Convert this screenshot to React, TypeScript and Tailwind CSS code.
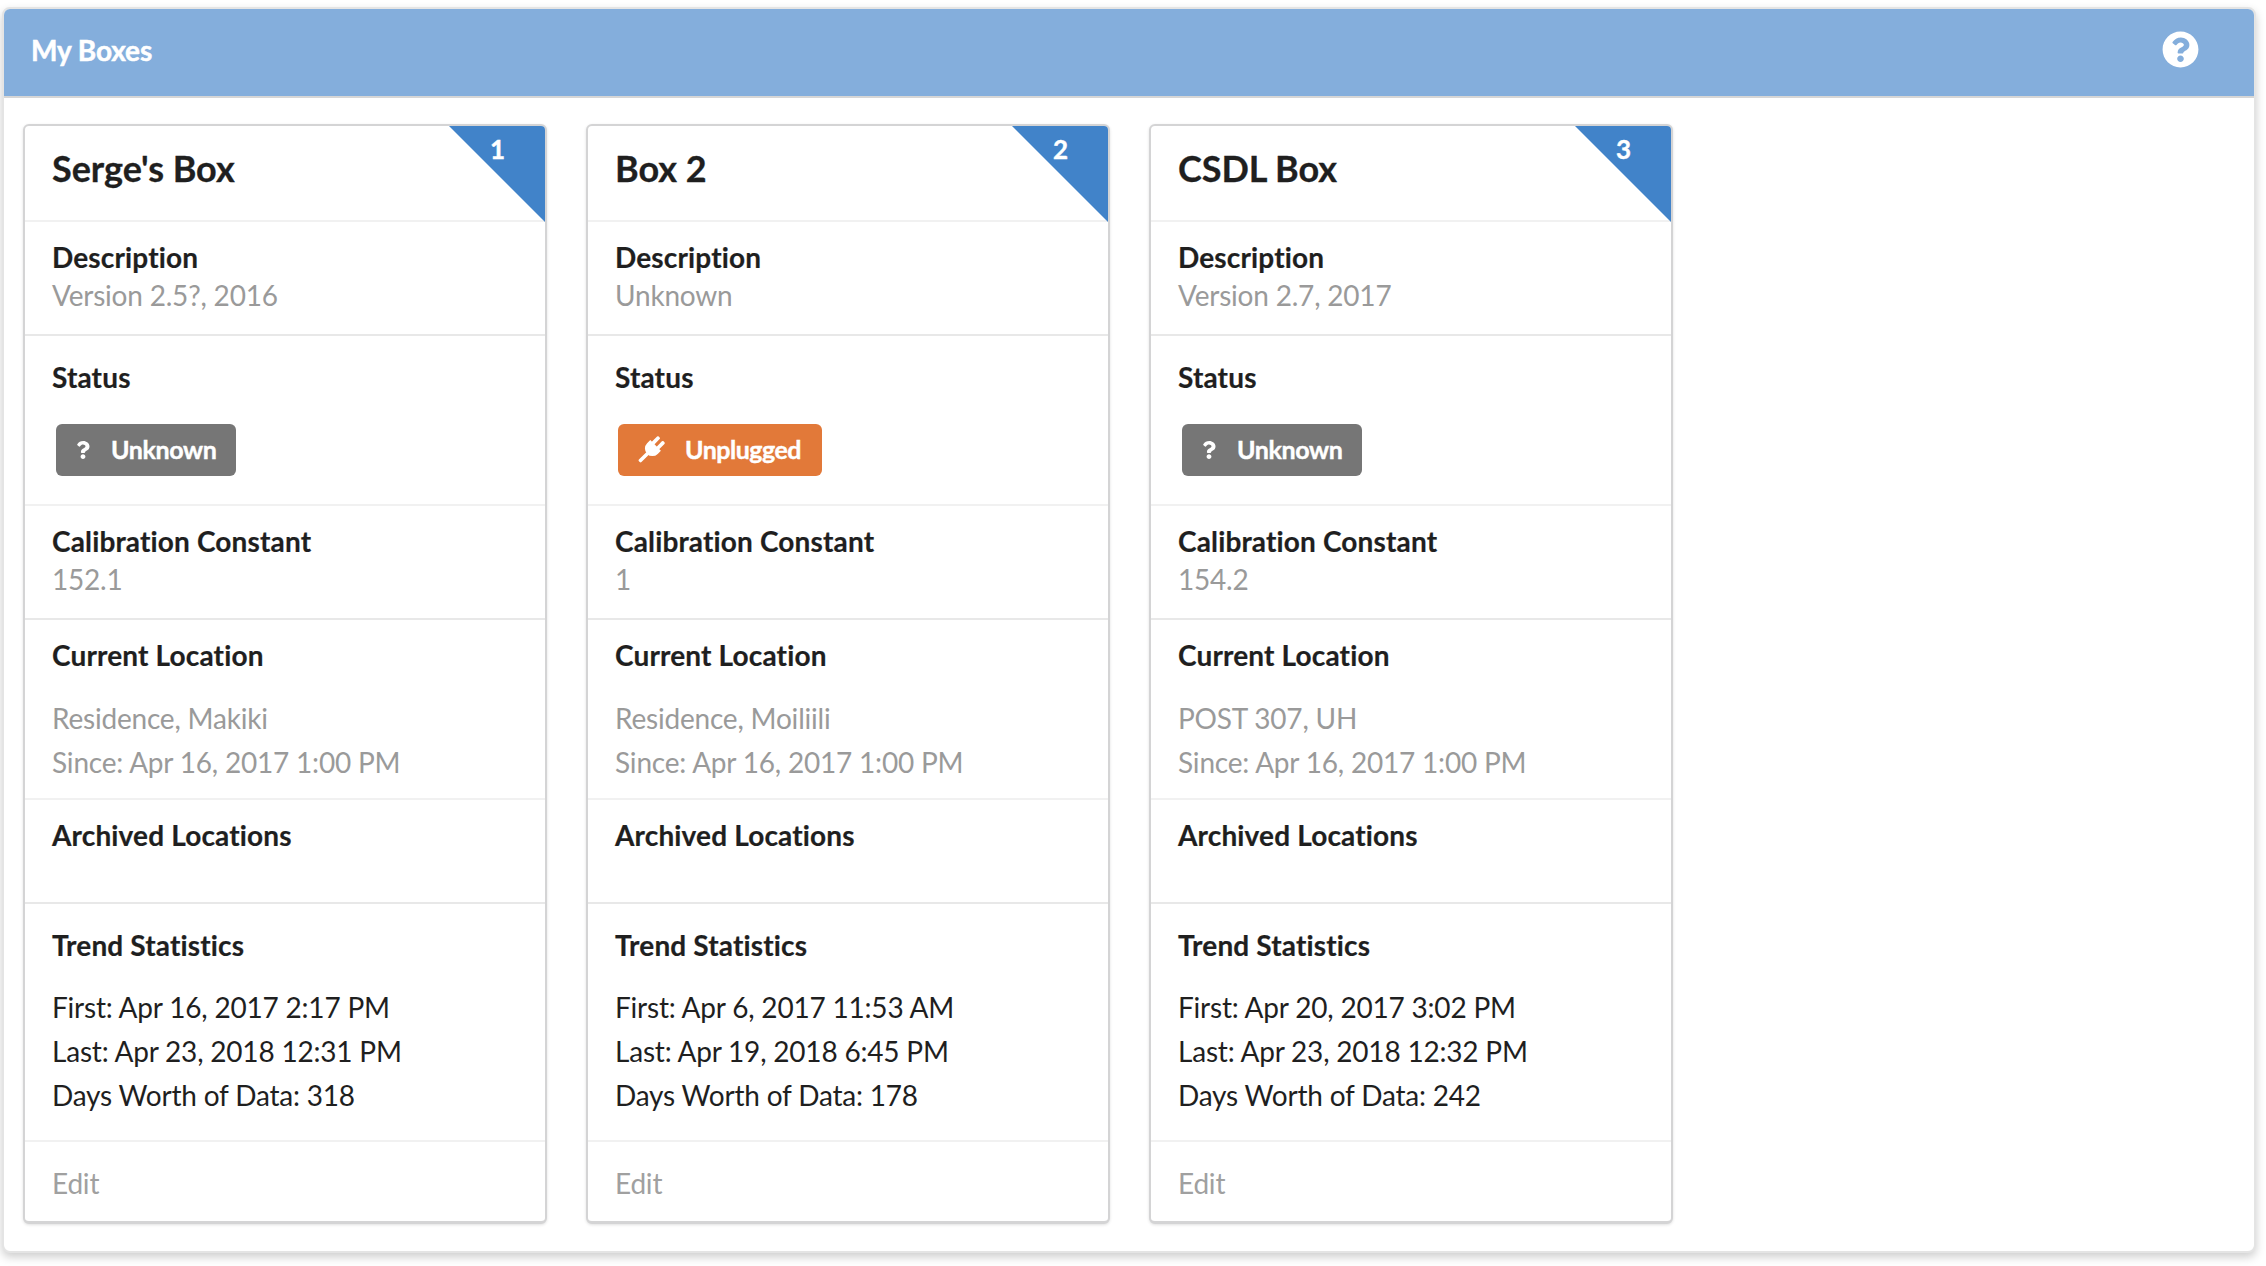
import React from "react";
import { FaQuestion, FaQuestionCircle } from "react-icons/fa";

type Box = {
  n: number; name: string; desc: string; status: "Unknown" | "Unplugged"; cal: string; loc: string;
  first: string; last: string; days: number;
};

const boxes: Box[] = [
  { n: 1, name: "Serge's Box", desc: "Version 2.5?, 2016", status: "Unknown", cal: "152.1", loc: "Residence, Makiki", first: "Apr 16, 2017 2:17 PM", last: "Apr 23, 2018 12:31 PM", days: 318 },
  { n: 2, name: "Box 2", desc: "Unknown", status: "Unplugged", cal: "1", loc: "Residence, Moiliili", first: "Apr 6, 2017 11:53 AM", last: "Apr 19, 2018 6:45 PM", days: 178 },
  { n: 3, name: "CSDL Box", desc: "Version 2.7, 2017", status: "Unknown", cal: "154.2", loc: "POST 307, UH", first: "Apr 20, 2017 3:02 PM", last: "Apr 23, 2018 12:32 PM", days: 242 },
];

function PlugIcon() {
  return (
    <svg viewBox="0 0 24 24" className="w-[24px] h-[24px] mr-[22px] overflow-visible" fill="currentColor">
      <g transform="rotate(45 12 12)">
        <rect x="6.8" y="-3" width="3.6" height="9.5" rx="1.2" />
        <rect x="13.6" y="-3" width="3.6" height="9.5" rx="1.2" />
        <path d="M4.5 5.5H19.5V10a7.5 7.5 0 0 1-15 0Z" />
        <rect x="10.2" y="16" width="3.6" height="12.5" rx="1.2" />
      </g>
    </svg>
  );
}

function Label({ children }: { children: React.ReactNode }) {
  return <div className="font-bold text-[#1f1f1f] h-[38px] leading-[38px] tracking-[0.15px] [-webkit-text-stroke:0.2px]">{children}</div>;
}

function Card({ b }: { b: Box }) {
  return (
    <div className="relative w-[524px] h-[1100px] flex flex-col rounded-[6px] border-2 border-[#d4d4d5] border-b-[3px] bg-white overflow-hidden shadow-[0_1px_3px_rgba(0,0,0,0.12)]">
      <div className="absolute top-0 right-0 w-[96px] h-[96px] bg-[#4183c9] [clip-path:polygon(0_0,100%_0,100%_100%)]">
        <span className="absolute top-[6px] right-[40px] text-white font-bold text-[26px] leading-[34px] [-webkit-text-stroke:0.4px]">{b.n}</span>
      </div>
      <div className="h-[96px] shrink-0 pl-[27px] pt-[19px] text-[36px] leading-[46px] font-bold text-[#1f1f1f] border-b-2 border-[#f1f1f1] tracking-[-0.05px] [-webkit-text-stroke:0.3px]">{b.name}</div>
      <div className="h-[114px] shrink-0 pl-[27px] pt-[16px] border-b-2 border-[#e8e8e8]">
        <Label>Description</Label>
        <div className="text-[#9a9a9a] leading-[38px]">{b.desc}</div>
      </div>
      <div className="h-[170px] shrink-0 pl-[27px] pt-[22px] border-b-2 border-[#f1f1f1]">
        <Label>Status</Label>
        <div className="mt-[28px] ml-[4px]">
          {b.status === "Unknown" ? (
            <span className="inline-flex items-center h-[52px] w-[180px] rounded-[6px] bg-[#767676] text-white font-bold text-[25px] tracking-[-0.35px] pl-[20px] [-webkit-text-stroke:0.4px]">
              <FaQuestion className="w-[14px] h-[18px] mr-[21px]" />Unknown
            </span>
          ) : (
            <span className="inline-flex items-center -ml-[1px] h-[52px] w-[204px] rounded-[6px] bg-[#e27939] text-white font-bold text-[25px] tracking-[-0.5px] pl-[21px] [-webkit-text-stroke:0.4px]">
              <PlugIcon />Unplugged
            </span>
          )}
        </div>
      </div>
      <div className="h-[114px] shrink-0 pl-[27px] pt-[16px] border-b-2 border-[#e8e8e8]">
        <Label>Calibration Constant</Label>
        <div className="text-[#9a9a9a] leading-[38px]">{b.cal}</div>
      </div>
      <div className="h-[180px] shrink-0 pl-[27px] pt-[16px] border-b-2 border-[#f1f1f1]">
        <Label>Current Location</Label>
        <div className="mt-[22px] text-[#9a9a9a] leading-[44px]">
          <div>{b.loc}</div>
          <div>Since: Apr 16, 2017 1:00 PM</div>
        </div>
      </div>
      <div className="h-[104px] shrink-0 pl-[27px] pt-[16px] border-b-2 border-[#e8e8e8]">
        <Label>Archived Locations</Label>
      </div>
      <div className="h-[238px] shrink-0 pl-[27px] pt-[22px] border-b-2 border-[#f1f1f1]">
        <Label>Trend Statistics</Label>
        <div className="mt-[21px] text-[#1f1f1f] leading-[44px]">
          <div>First: {b.first}</div>
          <div>Last: {b.last}</div>
          <div>Days Worth of Data: {b.days}</div>
        </div>
      </div>
      <div className="flex-1 pl-[27px] pt-[22px] text-[#a0a0a0] leading-[38px]">Edit</div>
    </div>
  );
}

export default function App() {
  return (
    <div className="w-[2266px] h-[1266px] bg-white pt-[7px] pl-[2px] overflow-hidden font-['Lato',sans-serif] text-[28px] tracking-[-0.2px]">
      <div className="w-[2254px] h-[1246px] rounded-[8px] border-2 border-[#e4e4e4] bg-white overflow-hidden shadow-[0_4px_10px_rgba(0,0,0,0.2)]">
        <div className="h-[89px] bg-[#84aedc] border-b-2 border-[#d6d6d6] flex items-center justify-between pl-[27px] pr-[55px] pb-[6px]">
          <span className="text-white font-bold text-[28px] tracking-[-0.1px] [-webkit-text-stroke:0.5px]">My Boxes</span>
          <FaQuestionCircle className="w-[37px] h-[37px] text-white" />
        </div>
        <div className="flex gap-[39px] pl-[19px] pt-[26px]">
          {boxes.map((b) => <Card key={b.n} b={b} />)}
        </div>
      </div>
    </div>
  );
}
